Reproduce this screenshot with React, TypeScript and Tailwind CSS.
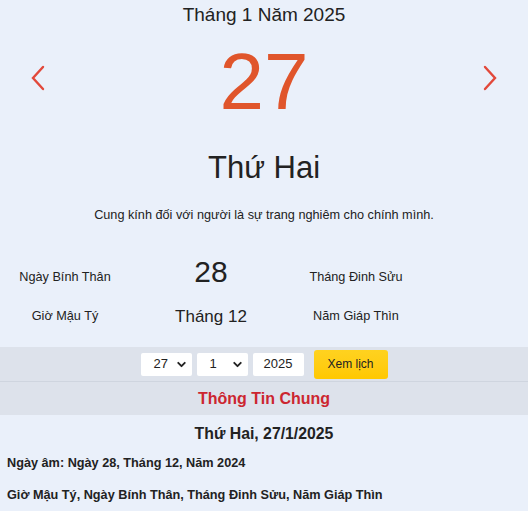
import { ChevronDown } from "lucide-react";

export default function App() {
  return (
    <div className="min-h-screen w-[528px] bg-[#eaf0fa] text-[#222] font-['Liberation_Sans',Arial,sans-serif]">
      {/* Header */}
      <div className="pt-[3px] text-center text-[19px] leading-[24px]">Tháng 1 Năm 2025</div>

      <div className="flex items-center justify-between px-[31px] h-[100px]">
        <svg className="mt-[2px]" width="14" height="26" viewBox="0 0 14 26" fill="none" stroke="#e2483a" strokeWidth="2.4" strokeLinecap="round">
          <path d="M12 2 L2 13 L12 24" />
        </svg>
        <div className="text-[80px] leading-[80px] text-[#e0552b] mt-[10px]">27</div>
        <svg className="mt-[2px]" width="14" height="26" viewBox="0 0 14 26" fill="none" stroke="#e2483a" strokeWidth="2.4" strokeLinecap="round">
          <path d="M2 2 L12 13 L2 24" />
        </svg>
      </div>

      <div className="text-center text-[31px] leading-[36px] mt-[23px]">Thứ Hai</div>
      <div className="text-center text-[12.7px] leading-[18px] mt-[20px]">Cung kính đối với người là sự trang nghiêm cho chính mình.</div>

      {/* Lunar info */}
      <div className="flex mt-[31px] text-[12.7px]">
        <div className="w-[130px] flex flex-col items-center">
          <div className="h-[43px] flex items-center pt-[3px]">Ngày Bính Thân</div>
          <div className="h-[38px] flex items-center">Giờ Mậu Tý</div>
        </div>
        <div className="w-[162px] flex flex-col items-center">
          <div className="h-[43px] flex items-center text-[30px] pb-[10px]">28</div>
          <div className="h-[38px] flex items-center text-[17px]">Tháng 12</div>
        </div>
        <div className="w-[128px] flex flex-col items-center">
          <div className="h-[43px] flex items-center pt-[3px]">Tháng Đinh Sửu</div>
          <div className="h-[38px] flex items-center">Năm Giáp Thìn</div>
        </div>
      </div>

      {/* Form band */}
      <div className="mt-[11px] bg-[#dde2eb]">
        <div className="flex items-center justify-center gap-[5px] h-[35px] border-b border-[#cfd5df]">
          <div className="w-[51px] h-[23px] bg-white rounded-[2px] flex items-center justify-between pl-[13px] pr-[4px] text-[13px]">
            <span>27</span>
            <ChevronDown size={13} strokeWidth={3.5} />
          </div>
          <div className="w-[51px] h-[23px] bg-white rounded-[2px] flex items-center justify-between pl-[13px] pr-[4px] text-[13px]">
            <span>1</span>
            <ChevronDown size={13} strokeWidth={3.5} />
          </div>
          <div className="w-[51px] h-[23px] bg-white rounded-[2px] flex items-center justify-center text-[13px]">2025</div>
          <div className="ml-[5px] w-[74px] h-[29px] rounded-[3px] bg-gradient-to-b from-[#ffd21f] to-[#ffc800] flex items-center justify-center text-[12px]">Xem lịch</div>
        </div>
        <div className="h-[33px] flex items-center justify-center text-[16px] font-bold text-[#cc2630]">Thông Tin Chung</div>
      </div>

      <div className="text-center text-[15.8px] font-bold mt-[9px] leading-[20px]">Thứ Hai, 27/1/2025</div>
      <div className="pl-[7px] text-[12.7px] font-bold mt-[10px] leading-[18px]">Ngày âm: Ngày 28, Tháng 12, Năm 2024</div>
      <div className="pl-[7px] text-[12.7px] font-bold mt-[14px] leading-[18px]">Giờ Mậu Tý, Ngày Bính Thân, Tháng Đinh Sửu, Năm Giáp Thìn</div>
    </div>
  );
}
